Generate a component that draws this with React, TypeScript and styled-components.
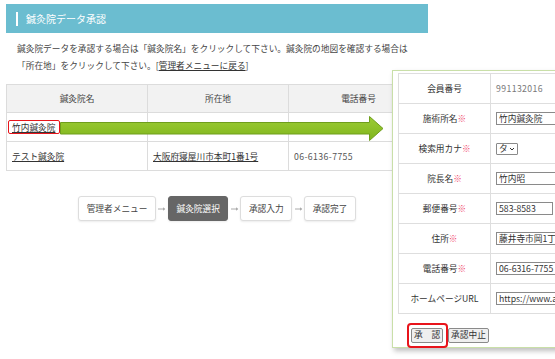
import React from "react";
import styled, { createGlobalStyle } from "styled-components";

const Global = createGlobalStyle`
  html, body { margin: 0; padding: 0; background: #fff; }
  body { font-family: "Noto Sans CJK JP", "Noto Sans", sans-serif; color: #333; }
  * { box-sizing: border-box; }
`;

const Page = styled.div`
  position: relative;
  width: 555px;
  height: 359px;
  overflow: hidden;
  background: #fff;
`;

const Main = styled.div`
  width: 434px;
  padding: 4px 6px 0 6px;
  display: flex;
  flex-direction: column;
`;

const TitleBar = styled.div`
  height: 29px;
  background: #6bbdd0;
  display: flex;
  align-items: center;
  gap: 8px;
  padding-left: 10px;
  color: #fff;
  font-size: 10px;
  &::before {
    content: "";
    width: 2px;
    height: 14px;
    background: #fff;
  }
`;

const Desc = styled.p`
  margin: 7px 0 0 0;
  padding-left: 11px;
  font-size: 8.7px;
  line-height: 17px;
  color: #444;
`;

const Link = styled.a`
  color: #333;
  text-decoration: underline;
  cursor: pointer;
`;

const Grid = styled.div`
  margin-top: 10px;
  display: grid;
  grid-template-columns: 141px 141px 140px;
  border-top: 1px solid #dcdcdc;
  border-left: 1px solid #dcdcdc;
`;

const Cell = styled.div<{ $head?: boolean }>`
  height: ${(p) => (p.$head ? "28px" : "29px")};
  display: flex;
  align-items: center;
  justify-content: ${(p) => (p.$head ? "center" : "flex-start")};
  padding-left: ${(p) => (p.$head ? "0" : "5px")};
  background: ${(p) => (p.$head ? "#f2f2f2" : "#fff")};
  border-right: 1px solid #dcdcdc;
  border-bottom: 1px solid #dcdcdc;
  font-size: 8.7px;
  color: ${(p) => (p.$head ? "#444" : "#555")};
  white-space: nowrap;
`;

const Digits = styled.span`
  letter-spacing: 0.4px;
`;

const RedBox = styled.span`
  display: inline-flex;
  align-items: center;
  border: 1.5px solid #e8141b;
  border-radius: 2px;
  padding: 0 4px 0 3px;
  height: 14px;
  margin-left: -4px;
`;

const ArrowOverlay = styled.svg`
  position: absolute;
  left: 60px;
  top: 115px;
`;

const Steps = styled.div`
  margin-top: 25px;
  display: flex;
  justify-content: center;
  align-items: center;
`;

const Step = styled.div<{ $active?: boolean }>`
  height: 25px;
  padding: 0 7.5px;
  display: flex;
  align-items: center;
  font-size: 8.7px;
  border: 1px solid ${(p) => (p.$active ? "#666" : "#ddd")};
  border-radius: 3px;
  background: ${(p) => (p.$active ? "#666" : "#fff")};
  color: ${(p) => (p.$active ? "#fff" : "#444")};
  box-shadow: 0 1px 2px rgba(0, 0, 0, 0.08);
`;

const StepArrow = styled.svg`
  width: 11px;
  height: 6px;
  margin: 0 0.5px;
`;

const Popup = styled.div`
  position: absolute;
  left: 392px;
  top: 70px;
  width: 230px;
  height: 278px;
  background: #fff;
  border: 1.5px solid #c9dfa8;
  box-shadow: 2px 3px 5px rgba(0, 0, 0, 0.25);
  padding: 2px 5px 0 5px;
  display: flex;
  flex-direction: column;
`;

const FormTable = styled.div`
  display: grid;
  grid-template-columns: 92px 1fr;
  border-top: 1px solid #dedede;
  border-left: 1px solid #dedede;
`;

const Label = styled.div`
  height: 30px;
  display: flex;
  align-items: center;
  justify-content: center;
  font-size: 8.7px;
  color: #333;
  border-right: 1px solid #dedede;
  border-bottom: 1px solid #dedede;
  white-space: nowrap;
`;

const Req = styled.span`
  color: #f0456a;
`;

const Value = styled.div`
  height: 30px;
  display: flex;
  align-items: center;
  padding-left: 5px;
  font-size: 8.7px;
  color: #777;
  border-bottom: 1px solid #dedede;
  white-space: nowrap;
  overflow: hidden;
`;

const Field = styled.input<{ $w?: number }>`
  width: ${(p) => p.$w ?? 200}px;
  height: 13px;
  border: 1px solid #8a8a8a;
  padding: 0 2px;
  font-family: inherit;
  font-size: 8.7px;
  color: #333;
  background: #fff;
  outline: none;
  flex-shrink: 0;
`;

const FakeSelect = styled.div`
  width: 22px;
  height: 12px;
  border: 1px solid #8a8a8a;
  border-radius: 1px;
  display: flex;
  align-items: center;
  gap: 1px;
  padding-left: 2px;
  font-size: 8.7px;
  color: #333;
`;

const Actions = styled.div`
  margin-top: 9px;
  padding-left: 9px;
  display: flex;
  align-items: center;
`;

const BtnRing = styled.span`
  display: inline-flex;
  border: 2px solid #e8141b;
  border-radius: 4px;
  padding: 3px 3px 3px 2px;
`;

const Button = styled.button`
  height: 15px;
  padding: 0 2px;
  font-family: inherit;
  font-size: 8.7px;
  color: #333;
  background: #efefef;
  border: 1px solid #8a8a8a;
  border-radius: 2px;
  display: flex;
  align-items: center;
  line-height: 1;
`;

const Arrow = () => (
  <StepArrow viewBox="0 0 11 6">
    <path d="M2 3 H8.5" stroke="#aaa" strokeWidth="1" />
    <path d="M7 1.3 L9.3 3 L7 4.7 Z" fill="#aaa" />
  </StepArrow>
);

export default function App() {
  const rows: [string, boolean, React.ReactNode][] = [
    ["会員番号", false, <Digits>991132016</Digits>],
    ["施術所名", true, <Field readOnly value="竹内鍼灸院" />],
    [
      "検索用カナ",
      true,
      <FakeSelect>
        タ
        <svg width="6" height="4" viewBox="0 0 6 4">
          <path d="M1 1 L3 3 L5 1" stroke="#333" strokeWidth="1" fill="none" />
        </svg>
      </FakeSelect>,
    ],
    ["院長名", true, <Field readOnly value="竹内昭" />],
    ["郵便番号", true, <Field readOnly value="583-8583" $w={57} />],
    ["住所", true, <Field readOnly value="藤井寺市岡1丁目" />],
    ["電話番号", true, <Field readOnly value="06-6316-7755" />],
    ["ホームページURL", false, <Field readOnly value="https://www.am" />],
  ];

  return (
    <Page>
      <Global />
      <Main>
        <TitleBar>鍼灸院データ承認</TitleBar>
        <Desc>
          鍼灸院データを承認する場合は「鍼灸院名」をクリックして下さい。鍼灸院の地図を確認する場合は
          <br />
          「所在地」をクリックして下さい。[<Link>管理者メニューに戻る</Link>]
        </Desc>
        <Grid>
          <Cell $head>鍼灸院名</Cell>
          <Cell $head>所在地</Cell>
          <Cell $head>電話番号</Cell>
          <Cell>
            <RedBox>
              <Link>竹内鍼灸院</Link>
            </RedBox>
          </Cell>
          <Cell />
          <Cell />
          <Cell>
            <Link>テスト鍼灸院</Link>
          </Cell>
          <Cell>
            <Link>大阪府寝屋川市本町1番1号</Link>
          </Cell>
          <Cell>
            <Digits>06-6136-7755</Digits>
          </Cell>
        </Grid>
        <Steps>
          <Step>管理者メニュー</Step>
          <Arrow />
          <Step $active>鍼灸院選択</Step>
          <Arrow />
          <Step>承認入力</Step>
          <Arrow />
          <Step>承認完了</Step>
        </Steps>
      </Main>

      <ArrowOverlay width="325" height="27" viewBox="0 0 325 27">
        <defs>
          <linearGradient id="g" x1="0" y1="0" x2="0" y2="1">
            <stop offset="0" stopColor="#9ccc35" />
            <stop offset="1" stopColor="#7fb51c" />
          </linearGradient>
        </defs>
        <path
          d="M0.5 7.5 H309.5 V1.5 L323 13.5 L309.5 25.5 V19 H0.5 Z"
          fill="url(#g)"
          stroke="#6f9e1c"
          strokeWidth="1"
        />
      </ArrowOverlay>

      <Popup>
        <FormTable>
          {rows.map(([label, req, val]) => (
            <React.Fragment key={label}>
              <Label>
                {label}
                {req && <Req>※</Req>}
              </Label>
              <Value>{val}</Value>
            </React.Fragment>
          ))}
        </FormTable>
        <Actions>
          <BtnRing>
            <Button>承　認</Button>
          </BtnRing>
          <Button>承認中止</Button>
        </Actions>
      </Popup>
    </Page>
  );
}
